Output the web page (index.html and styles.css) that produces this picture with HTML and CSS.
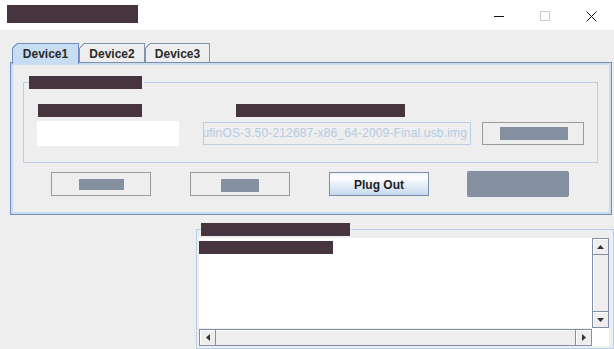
FILE: index.html
```html
<!DOCTYPE html>
<html lang="en">
<head>
<meta charset="utf-8">
<title>Device</title>
<link rel="stylesheet" href="styles.css">
</head>
<body>
<div class="window">
  <header class="titlebar">
    <span class="redact title-redact"></span>
    <div class="caption">
      <div class="cap-btn"><svg width="10" height="10" viewBox="0 0 10 10"><line x1="0" y1="5.5" x2="10" y2="5.5" stroke="#111" stroke-width="1"/></svg></div>
      <div class="cap-btn"><svg width="10" height="10" viewBox="0 0 10 10"><rect x="0.5" y="0.5" width="9" height="9" fill="none" stroke="#c8c8c8" stroke-width="1"/></svg></div>
      <div class="cap-btn"><svg width="11" height="11" viewBox="0 0 11 11"><path d="M0.5 0.5 L10.5 10.5 M10.5 0.5 L0.5 10.5" stroke="#111" stroke-width="1" fill="none"/></svg></div>
    </div>
  </header>

  <nav class="tabs">
    <div class="tab tab-1 selected">Device1</div>
    <div class="tab tab-2">Device2</div>
    <div class="tab tab-3">Device3</div>
  </nav>

  <section class="panel">
    <fieldset class="group">
      <legend class="group-legend"><span class="redact group-title"></span></legend>
      <div class="label-row">
        <span class="redact label-1"></span>
        <span class="redact label-2"></span>
      </div>
      <div class="field-row">
        <div class="textfield"></div>
        <div class="filefield"><span class="filefield-text">ufinOS-3.50-212687-x86_64-2009-Final.usb.img</span></div>
        <div class="btn btn-outline btn-browse"><span class="gblock gblock-browse"></span></div>
      </div>
    </fieldset>

    <div class="button-row">
      <div class="btn btn-outline"><span class="gblock gblock-1"></span></div>
      <div class="btn btn-outline"><span class="gblock gblock-2"></span></div>
      <div class="btn btn-plug">Plug Out</div>
      <div class="btn btn-filled"></div>
    </div>
  </section>

  <fieldset class="output">
    <legend class="output-legend"><span class="redact output-title"></span></legend>
    <div class="pane">
      <div class="textarea"><span class="redact log-line"></span></div>
      <div class="vbar">
        <div class="arrow arrow-up"><svg width="7" height="4" viewBox="0 0 7 4"><polygon points="3.5,0 7,4 0,4" fill="#333"/></svg></div>
        <div class="track"></div>
        <div class="arrow arrow-down"><svg width="7" height="4" viewBox="0 0 7 4"><polygon points="0,0 7,0 3.5,4" fill="#333"/></svg></div>
      </div>
      <div class="hbar">
        <div class="harrow harrow-left"><svg width="4" height="7" viewBox="0 0 4 7"><polygon points="0,3.5 4,0 4,7" fill="#333"/></svg></div>
        <div class="htrack"></div>
        <div class="harrow harrow-right"><svg width="4" height="7" viewBox="0 0 4 7"><polygon points="0,0 4,3.5 0,7" fill="#333"/></svg></div>
      </div>
      <div class="corner"></div>
    </div>
  </fieldset>
</div>
</body>
</html>
```

FILE: styles.css
```css
* { box-sizing: border-box; }

html, body {
  margin: 0;
  padding: 0;
}

body {
  width: 614px;
  height: 349px;
  overflow: hidden;
  background: #eeeeee;
  font-family: "Liberation Sans", Arial, sans-serif;
  font-size: 12px;
  color: #222;
}

.redact {
  display: block;
  background: #46343f;
}

/* Title bar */
.titlebar {
  display: flex;
  height: 30px;
  background: #ffffff;
}

.title-redact {
  width: 131px;
  height: 18px;
  margin: 5px 0 0 7px;
}

.caption {
  display: flex;
  margin-left: auto;
}

.cap-btn {
  width: 46px;
  height: 30px;
  display: flex;
  justify-content: center;
  align-items: flex-start;
  padding-top: 11px;
}

.cap-btn svg { display: block; }

/* Tabs */
.tabs {
  display: flex;
  height: 19px;
  margin: 13px 0 0 12px;
  position: relative;
  z-index: 1;
}

.tab {
  height: 19px;
  border: 1px solid #8193b1;
  border-bottom: none;
  font-weight: bold;
  font-size: 12px;
  line-height: 20px;
  text-align: center;
  color: #2b2b2b;
  background-origin: border-box;
  background-image: linear-gradient(135deg, transparent 0 3.3px, #8193b1 3.3px 4.5px, transparent 4.5px);
  background-color: #eeeeee;
  clip-path: polygon(5px 0, 100% 0, 100% 100%, 0 100%, 0 5px);
  white-space: nowrap;
}

.tab-1 { width: 67px; }
.tab-2 { width: 66px; }
.tab-3 { width: 65px; }

.tab.selected {
  height: 21px;
  margin-bottom: -2px;
  background-color: #c8ddf2;
  border-color: #6f8dc6;
  background-image: linear-gradient(135deg, transparent 0 3.3px, #6f8dc6 3.3px 4.5px, transparent 4.5px);
}

/* Tab panel */
.panel {
  width: 602px;
  margin-left: 10px;
  border: 1px solid #7c8dac;
  border-left-color: #6f8fce;
  box-shadow: inset 0 0 0 2px #c8ddf2;
  padding: 13px 0 17px 0;
}

.group {
  width: 575px;
  margin: 0 0 0 12px;
  border: 1px solid #b8cfe6;
  padding: 15px 0 16px 0;
  min-inline-size: 0;
}

.group-legend {
  padding: 0 2px 0 0;
  margin-left: 5px;
}

.group-title {
  width: 113px;
  height: 13px;
}

.label-row {
  display: flex;
  height: 13px;
  padding-left: 14px;
}

.label-1 { width: 104px; height: 13px; }
.label-2 { width: 169px; height: 13px; margin-left: 94px; }

.field-row {
  display: flex;
  align-items: center;
  height: 25px;
  margin-top: 4px;
  padding-left: 13px;
}

.textfield {
  width: 142px;
  height: 25px;
  background: #ffffff;
}

.filefield {
  width: 268px;
  height: 23px;
  margin-left: 24px;
  border: 1px solid #b8cfe6;
  display: flex;
  justify-content: flex-end;
  overflow: hidden;
  padding-right: 3px;
  line-height: 21px;
  color: #b3cbe4;
  font-size: 12px;
  letter-spacing: 0.16px;
  white-space: nowrap;
}

.filefield-text { flex-shrink: 0; }

.btn {
  display: flex;
  align-items: center;
  justify-content: center;
}

.btn-outline {
  width: 100px;
  height: 24px;
  border: 1px solid #9b9b9b;
  background: #eeeeee;
}

.btn-browse {
  width: 102px;
  height: 23px;
  margin-left: 11px;
}

.gblock {
  display: block;
  background: #848fa0;
}

.gblock-browse { width: 68px; height: 13px; margin-left: 1px; }
.gblock-1 { width: 45px; height: 11px; margin: 1px 0 0 1px; }
.gblock-2 { width: 38px; height: 13px; margin: 2px 0 0 0; }

.button-row {
  display: flex;
  align-items: center;
  gap: 39px;
  height: 26px;
  margin: 8px 0 0 40px;
}

.btn-plug {
  width: 100px;
  height: 24px;
  border: 1px solid #7c8dac;
  background: linear-gradient(to bottom, #eef4fb 0%, #ffffff 22%, #e8f0f9 50%, #c6d9ef 100%);
  font-weight: bold;
  font-size: 12px;
  color: #1e1e1e;
  padding-top: 1px;
}

.btn-filled {
  width: 102px;
  height: 26px;
  margin-left: -1px;
  background: #848fa0;
  border-radius: 2px;
}

/* Output */
.output {
  width: 418px;
  margin: 8px 0 0 196px;
  border: 1px solid #b8cfe6;
  padding: 2px 4px 2px 2px;
  min-inline-size: 0;
}

.output-legend {
  padding: 0 1px 0 0;
  margin-left: 2px;
}

.output-title {
  width: 149px;
  height: 13px;
}

.pane {
  display: grid;
  grid-template-columns: 393px 17px;
  grid-template-rows: 90px 18px;
  width: 410px;
  height: 108px;
}

.textarea {
  background: #ffffff;
  padding-top: 3px;
}

.log-line {
  width: 134px;
  height: 13px;
}

.vbar {
  display: flex;
  flex-direction: column;
  border: 1px solid #7f8fab;
  background: #eeeeee;
}

.arrow {
  height: 15px;
  flex-shrink: 0;
  display: flex;
  justify-content: center;
  align-items: center;
  box-shadow: inset 1px 1px 0 #ffffff;
}

.arrow svg, .harrow svg { display: block; }

.arrow-up { border-bottom: 1px solid #7f8fab; height: 16px; }
.arrow-down { border-top: 1px solid #7f8fab; height: 16px; }

.track {
  flex: 1;
  box-shadow: inset 1px 0 0 #ffffff;
}

.hbar {
  display: flex;
  border: 1px solid #7f8fab;
  background: #eeeeee;
  margin-top: 1px;
}

.harrow {
  width: 16px;
  flex-shrink: 0;
  display: flex;
  justify-content: center;
  align-items: center;
  box-shadow: inset 1px 1px 0 #ffffff;
}

.harrow-left { border-right: 1px solid #7f8fab; }
.harrow-right { border-left: 1px solid #7f8fab; }

.htrack {
  flex: 1;
  box-shadow: inset 0 1px 0 #ffffff;
}

.corner {
  background: #ffffff;
}
```
